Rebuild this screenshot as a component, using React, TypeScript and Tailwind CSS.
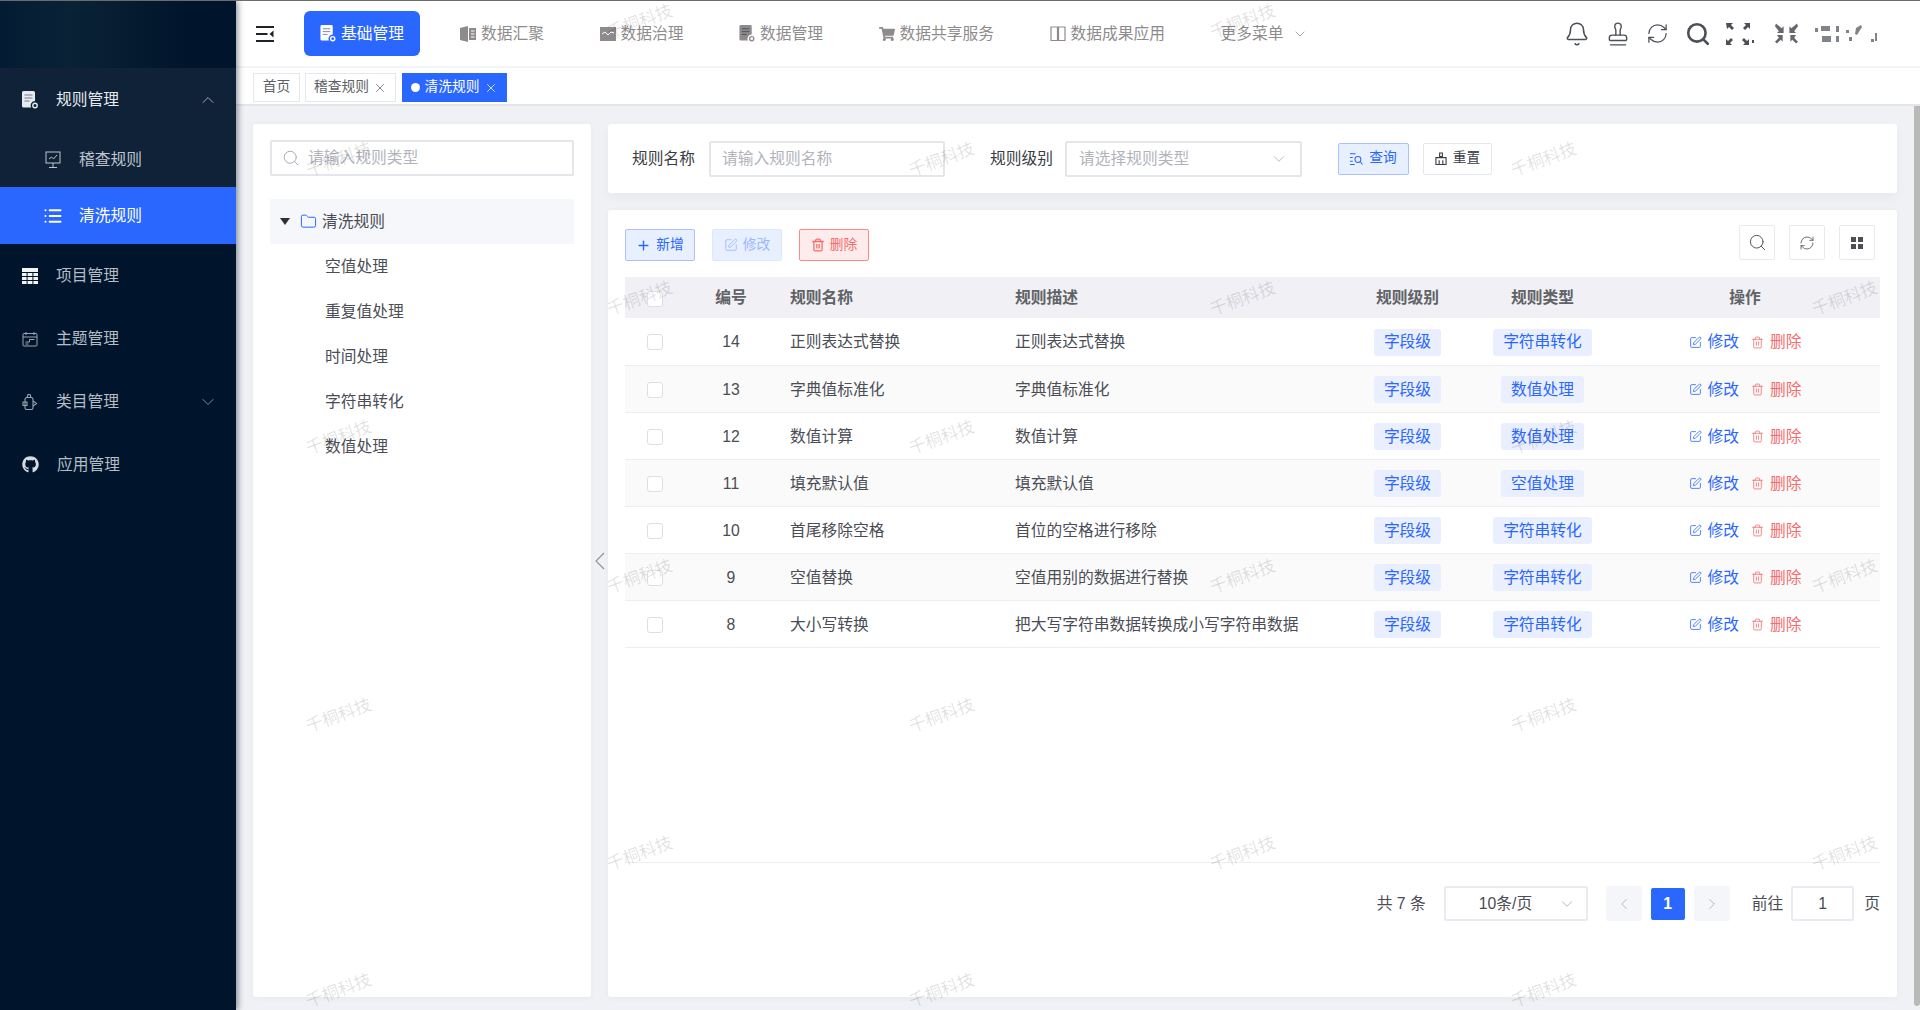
import React from "react";
import { Bell, Stamp, RefreshCw, Search, ChevronUp, ChevronDown, ChevronLeft, ChevronRight, X, Plus, SquarePen, Trash2, List, Folder } from "lucide-react";
import { FaGithub, FaShoppingCart } from "react-icons/fa";

const rows = [
  { id: 14, name: "正则表达式替换", desc: "正则表达式替换", type: "字符串转化" },
  { id: 13, name: "字典值标准化", desc: "字典值标准化", type: "数值处理" },
  { id: 12, name: "数值计算", desc: "数值计算", type: "数值处理" },
  { id: 11, name: "填充默认值", desc: "填充默认值", type: "空值处理" },
  { id: 10, name: "首尾移除空格", desc: "首位的空格进行移除", type: "字符串转化" },
  { id: 9, name: "空值替换", desc: "空值用别的数据进行替换", type: "字符串转化" },
  { id: 8, name: "大小写转换", desc: "把大写字符串数据转换成小写字符串数据", type: "字符串转化" },
];

const treeItems = ["空值处理", "重复值处理", "时间处理", "字符串转化", "数值处理"];

const marks = [
  [339, 159], [942, 159], [1544, 159],
  [339, 437], [942, 437], [1544, 437],
  [339, 715], [942, 715], [1544, 715],
  [339, 990], [942, 990], [1544, 990],
  [640, 21], [1243, 21],
  [640, 298], [1243, 298], [1845, 298],
  [640, 576], [1243, 576], [1845, 576],
  [640, 853], [1243, 853], [1845, 853],
];

const DocIcon = ({ className }: { className?: string }) => (
  <svg viewBox="0 0 16 18" className={className} fill="currentColor">
    <path d="M1.5 0h10A1.5 1.5 0 0 1 13 1.5V10a4.5 4.5 0 0 0-4 6.5H1.5A1.5 1.5 0 0 1 0 15V1.5A1.5 1.5 0 0 1 1.5 0z" />
    <path d="M2.5 4h8M2.5 7h8M2.5 10h5" stroke="#0f2238" strokeOpacity=".55" strokeWidth="1" />
    <circle cx="13" cy="14.5" r="2.2" fill="none" stroke="currentColor" strokeWidth="1.4" />
  </svg>
);

const MonitorIcon = () => (
  <svg viewBox="0 0 16 18" className="h-[18px] w-[16px]" fill="none" stroke="currentColor" strokeWidth="1">
    <rect x="1" y="1" width="14" height="11" />
    <path d="M8 12v4M4 16.5h8M4 8l2.5-2 2 2 3.5-4" />
  </svg>
);

const CalendarIcon = () => (
  <svg viewBox="0 0 16 16" className="h-[16px] w-[16px]" fill="none" stroke="currentColor" strokeWidth="1">
    <rect x="1" y="2.5" width="14" height="12.5" rx="1" />
    <path d="M4 1v3M12 1v3M1 6h14M3.5 11h4V8.5h5M3.5 13h3" />
  </svg>
);

const PotIcon = () => (
  <svg viewBox="0 0 16 18" className="h-[18px] w-[16px]" fill="none" stroke="currentColor" strokeWidth="1.1">
    <path d="M3 6.5a2 2 0 0 1 2-2h4a2 2 0 0 1 2 2V15a1.5 1.5 0 0 1-1.5 1.5h-5A1.5 1.5 0 0 1 3 15z" />
    <path d="M5 4.5 6 1.5h2l1 3M11 8l3.5 2.5L11 13M1 9h4v3.5H1z" />
  </svg>
);

const TableIcon = () => (
  <svg viewBox="0 0 16 16" className="h-[16px] w-[16px]" fill="currentColor">
    <path d="M0 0h16v4H0zM0 5h4.6v3H0zM5.6 5h4.8v3H5.6zM11.4 5H16v3h-4.6zM0 9h4.6v3H0zM5.6 9h4.8v3H5.6zM11.4 9H16v3h-4.6zM0 13h4.6v3H0zM5.6 13h4.8v3H5.6zM11.4 13H16v3h-4.6z" />
  </svg>
);

const BookIcon = () => (
  <svg viewBox="0 0 16 16" className="h-[16px] w-[16px]" fill="currentColor">
    <path d="M0 2l8-2v16l-8-2zM9 2h7v12H9z" />
    <path d="M11 5h3.5M11 8h3.5M11 11h3.5" stroke="#fff" strokeWidth="1" />
  </svg>
);

const ChartIcon = () => (
  <svg viewBox="0 0 16 14" className="h-[14px] w-[16px]" fill="currentColor">
    <path d="M0 0h16v14H0z" />
    <path d="M2 7l3-2 3 3 3-3 3 1" fill="none" stroke="#fff" strokeWidth="1" />
  </svg>
);

const OpenBookIcon = () => (
  <svg viewBox="0 0 16 16" className="h-[16px] w-[16px]" fill="none" stroke="currentColor" strokeWidth="1.2">
    <path d="M1 1h6.5v13.5H1zM8.5 1H15v13.5H8.5z" />
  </svg>
);

const navItems = [
  { label: "数据汇聚", icon: <BookIcon /> },
  { label: "数据治理", icon: <ChartIcon /> },
  { label: "数据管理", icon: <DocIcon className="h-[17px] w-[16px]" /> },
  { label: "数据共享服务", icon: <FaShoppingCart className="h-[16px] w-[16px]" /> },
  { label: "数据成果应用", icon: <OpenBookIcon /> },
];

const sideItems = [
  { label: "项目管理", icon: <TableIcon />, white: true },
  { label: "主题管理", icon: <CalendarIcon /> },
  { label: "类目管理", icon: <PotIcon />, arrow: true },
  { label: "应用管理", icon: <FaGithub className="h-[17px] w-[17px] text-[#d5dbe2]" /> },
];

const Sidebar = () => (
  <aside className="z-10 flex w-[236px] shrink-0 flex-col bg-[#00152b] text-[15.75px] shadow-[2px_0_6px_rgba(0,21,41,0.45)]">
    <div className="h-[67px] bg-[linear-gradient(90deg,#031c33,#0a2236_30%,#00152b_80%)]" />
    <div className="bg-[#0f2238]">
      <div className="flex h-[62px] items-center pl-[22px] pr-[18px] pt-[2px] text-[#e6ebf0]">
        <DocIcon className="h-[18px] w-[16px]" />
        <span className="ml-[18px]">规则管理</span>
        <ChevronUp className="ml-auto h-[20px] w-[20px] text-[#aeb6c0]" strokeWidth={1.1} />
      </div>
      <div className="flex h-[57px] items-center pl-[45px] pt-[2px] text-[#bcc5cf]">
        <MonitorIcon />
        <span className="ml-[18px]">稽查规则</span>
      </div>
    </div>
    <div className="flex h-[57px] items-center bg-[#2a67fe] pl-[43px] pt-[1px] text-white">
      <List className="h-[20px] w-[20px]" strokeWidth={2.4} />
      <span className="ml-[16px]">清洗规则</span>
    </div>
    {sideItems.map((item) => (
      <div key={item.label} className="flex h-[63px] items-center pl-[22px] pr-[18px] text-[#b4bdc8]">
        <span className={item.white ? "text-[#f2f4f6]" : "text-[#9aa5b1]"}>{item.icon}</span>
        <span className="ml-[18px]">{item.label}</span>
        {item.arrow && <ChevronDown className="ml-auto h-[20px] w-[20px] text-[#8d97a3]" strokeWidth={1.1} />}
      </div>
    ))}
  </aside>
);

const Header = () => (
  <header className="flex h-[67px] shrink-0 items-center border-b-2 border-[#f3f4f6] bg-white pl-[20px] pr-[40px] text-[15.75px] text-[#8f8b8d]">
    <svg viewBox="0 0 18 16" className="h-[16px] w-[18px] text-[#1f2329]" fill="currentColor">
      <path d="M0 0h18v2H0zM0 7h11.5v2H0zM0 14h18v2H0zM17.5 4.5v7L13.5 8z" />
    </svg>
    <button className="ml-[30px] flex h-[45px] w-[116px] items-center justify-center gap-[5px] rounded-[6px] bg-[#2a67fe] text-white">
      <DocIcon className="h-[17px] w-[16px]" />
      基础管理
    </button>
    <nav className="ml-[40px] flex items-center gap-[55.5px]">
      {navItems.map((item) => (
        <div key={item.label} className="flex items-center gap-[5px]">
          {item.icon}
          <span>{item.label}</span>
        </div>
      ))}
      <div className="flex items-center gap-[8px]">
        <span>更多菜单</span>
        <ChevronDown className="h-[16px] w-[16px]" strokeWidth={1.1} />
      </div>
    </nav>
    <div className="ml-auto flex items-center text-[#4b4f57]">
      <Bell className="h-[26px] w-[26px]" strokeWidth={1.4} />
      <Stamp className="ml-[15px] h-[26px] w-[26px]" strokeWidth={1.3} />
      <RefreshCw className="ml-[15px] h-[23px] w-[23px]" strokeWidth={1.3} />
      <Search className="ml-[16px] h-[26px] w-[26px]" strokeWidth={2.4} />
      <svg viewBox="0 0 28 22" className="ml-[15px] h-[22px] w-[28px] blur-[0.3px]" fill="currentColor">
        <path d="M0 0h7L5 2l3 3-2 2-3-3-2 2zM18 0h6v6l-2-2-3 3-2-2 3-3zM0 22v-6l2 2 3-3 2 2-3 3 2 2zM18 15l3 3 2-2v6h-6l2-2-3-3zM26 17h2v3h-2z" />
      </svg>
      <svg viewBox="0 0 24 22" className="ml-[21px] h-[22px] w-[23px] opacity-85 blur-[0.5px]" fill="currentColor">
        <path d="M1 0l6 5 2-2v7H2l2-2-4-5zM23 0l-6 5-2-2v7h7l-2-2 4-5zM8 12v7l-2-2-4 4-2-2 4-4-2-3zM16 12v7l2-2 4 4 2-2-4-4 2-3z" />
      </svg>
      <svg viewBox="0 0 65 22" className="ml-[17px] h-[22px] w-[65px] opacity-70 blur-[0.7px]" fill="currentColor">
        <path d="M0 5h3v4H0zM6 3h9v5H6zM7 13h9v6H7zM21 3h3v6h-3zM21 13h3v6h-3zM31 7h3v3h-3zM34 14h3v4h-3zM41 5l5-3 1 2-5 8-2-1zM60 10h2v8h-2zM56 16h3v3h-3z" />
      </svg>
    </div>
  </header>
);

const Tags = () => (
  <div className="flex h-[38px] shrink-0 gap-[5px] border-b-2 border-[#e3e5e9] bg-white pl-[17px] pt-[5px] text-[13.75px]">
    <div className="flex h-[29px] w-[47px] items-center justify-center border border-[#e4e7ed] text-[#5c5f66]">首页</div>
    <div className="flex h-[29px] w-[91px] items-center justify-center gap-[4px] border border-[#e4e7ed] text-[#5c5f66]">
      稽查规则
      <X className="h-[14px] w-[14px]" strokeWidth={1.3} />
    </div>
    <div className="ml-[1px] flex h-[29px] w-[105px] items-center justify-center gap-[4px] bg-[#2a67fe] text-white">
      <span className="h-[9px] w-[9px] rounded-full bg-white" />
      清洗规则
      <X className="h-[14px] w-[14px]" strokeWidth={1.3} />
    </div>
  </div>
);

const TreePanel = () => (
  <section className="flex w-[338px] shrink-0 flex-col rounded-[3px] bg-white px-[17px] pt-[16px] text-[15.75px] shadow-[0_1px_6px_rgba(0,0,0,0.04)]">
    <div className="flex h-[36px] items-center rounded-[2px] border-2 border-[#e4e6ec] pl-[10px]">
      <Search className="h-[18px] w-[18px] text-[#a8abb2]" strokeWidth={1.3} />
      <input readOnly placeholder="请输入规则类型" className="ml-[8px] min-w-0 flex-1 bg-transparent outline-none placeholder:text-[#b1b4bb]" />
    </div>
    <div className="mt-[23px] flex h-[45px] items-center bg-[#f5f7fa] pl-[10px] text-[#4a4d55]">
      <span className="h-0 w-0 border-x-[5px] border-t-[7px] border-x-transparent border-t-[#303133]" />
      <Folder className="ml-[10px] h-[17px] w-[17px] text-[#2a67fe]" strokeWidth={1.4} />
      <span className="ml-[5px]">清洗规则</span>
    </div>
    {treeItems.map((item) => (
      <div key={item} className="flex h-[45px] items-center pl-[55px] text-[#4a4d55]">{item}</div>
    ))}
  </section>
);

const Filter = () => (
  <section className="flex h-[69px] shrink-0 items-center rounded-[3px] bg-white pl-[24px] text-[15.75px] text-[#3a3d44] shadow-[0_4px_12px_rgba(0,0,0,0.04)]">
    <span>规则名称</span>
    <input readOnly placeholder="请输入规则名称" className="ml-[14px] h-[36px] w-[236px] rounded-[2px] border-2 border-[#e4e6ec] pl-[11px] outline-none placeholder:text-[#b1b4bb]" />
    <span className="ml-[45px]">规则级别</span>
    <div className="ml-[12px] flex h-[36px] w-[237px] items-center justify-between rounded-[2px] border-2 border-[#e4e6ec] pl-[12px] pr-[12px] text-[#b1b4bb]">
      请选择规则类型
      <ChevronDown className="h-[18px] w-[18px] text-[#a8abb2]" strokeWidth={1.1} />
    </div>
    <button className="ml-[36px] flex h-[32px] w-[71px] items-center justify-center gap-[6px] rounded-[2px] border border-[#a9c2ff] bg-[#e8efff] text-[13.75px] text-[#2a67fe]">
      <svg viewBox="0 0 14 14" className="h-[13px] w-[13px]" fill="none" stroke="currentColor" strokeWidth="1.1">
        <path d="M0 2h6M0 6h3M0 10h3M0 13.5h5" />
        <circle cx="8.5" cy="8" r="3.2" />
        <path d="M11 10.5l2.5 3" />
      </svg>
      查询
    </button>
    <button className="ml-[14px] flex h-[32px] w-[69px] items-center justify-center gap-[6px] rounded-[2px] border border-[#e4e7ed] text-[13.75px] text-[#3a3d44]">
      <svg viewBox="0 0 13 14" className="h-[13px] w-[12px]" fill="none" stroke="currentColor" strokeWidth="1.2">
        <path d="M5 1h3v4H5zM1 6h11v7.5H1zM4.5 9v4.5M8.5 9v4.5" />
      </svg>
      重置
    </button>
  </section>
);

const Tag = ({ text }: { text: string }) => (
  <span className="inline-flex h-[27px] items-center rounded-[3px] bg-[#e9efff] px-[10px] text-[#2a67fe]">{text}</span>
);

const ToolButton = ({ children }: { children: React.ReactNode }) => (
  <button className="flex h-[35px] w-[36px] items-center justify-center rounded-[2px] border border-[#e8eaee] text-[#4b4f57]">{children}</button>
);

const Checkbox = () => <span className="inline-block h-[16px] w-[16px] rounded-[3px] border border-[#dcdfe6] bg-white align-middle" />;

const DataTable = () => (
  <section className="mt-[17px] flex min-h-0 flex-1 flex-col rounded-[3px] bg-white px-[17px] pt-[15px] text-[15.75px] shadow-[0_1px_6px_rgba(0,0,0,0.04)]">
    <div className="flex h-[52px] shrink-0 items-start justify-between">
      <div className="mt-[4px] flex gap-[17px] text-[13.75px]">
        <button className="flex h-[32px] w-[70px] items-center justify-center gap-[5px] rounded-[2px] border border-[#a9c2ff] bg-[#e8efff] text-[#2a67fe]">
          <Plus className="h-[15px] w-[15px]" strokeWidth={2.2} />
          新增
        </button>
        <button className="flex h-[32px] w-[70px] items-center justify-center gap-[5px] rounded-[2px] border border-[#dfe7ff] bg-[#e8efff] text-[#9ab8ff]">
          <SquarePen className="h-[14px] w-[14px]" strokeWidth={1.5} />
          修改
        </button>
        <button className="flex h-[32px] w-[70px] items-center justify-center gap-[5px] rounded-[2px] border border-[#fb8a8a] bg-[#feecec] text-[#f56c6c]">
          <Trash2 className="h-[14px] w-[14px]" strokeWidth={2.2} />
          删除
        </button>
      </div>
      <div className="mr-[5px] flex gap-[14px]">
        <ToolButton><Search className="h-[19px] w-[19px]" strokeWidth={1.2} /></ToolButton>
        <ToolButton><RefreshCw className="h-[16px] w-[16px]" strokeWidth={1.2} /></ToolButton>
        <ToolButton>
          <svg viewBox="0 0 12 12" className="h-[12px] w-[12px]" fill="currentColor">
            <path d="M0 0h5v5H0zM7 0h5v5H7zM0 7h5v5H0zM7 7h5v5H7z" />
          </svg>
        </ToolButton>
      </div>
    </div>
    <table className="w-full table-fixed border-collapse">
      <colgroup>
        <col className="w-[60px]" />
        <col className="w-[92px]" />
        <col className="w-[224px]" />
        <col className="w-[339px]" />
        <col className="w-[135px]" />
        <col className="w-[135px]" />
        <col className="w-[270px]" />
      </colgroup>
      <thead>
        <tr className="h-[41px] bg-[#f0f0f5] text-[#606266]">
          <th><Checkbox /></th>
          <th className="font-semibold">编号</th>
          <th className="pl-[13px] text-left font-semibold">规则名称</th>
          <th className="pl-[14px] text-left font-semibold">规则描述</th>
          <th className="font-semibold">规则级别</th>
          <th className="font-semibold">规则类型</th>
          <th className="font-semibold">操作</th>
        </tr>
      </thead>
      <tbody className="text-[#4a4d55]">
        {rows.map((row, i) => (
          <tr key={row.id} className={`h-[47px] border-b border-[#ebeef5] ${i % 2 === 1 ? "bg-[#fafafa]" : "bg-white"}`}>
            <td className="text-center"><Checkbox /></td>
            <td className="pt-[2px] text-center">{row.id}</td>
            <td className="pl-[13px] pt-[2px]">{row.name}</td>
            <td className="pl-[14px] pt-[2px]">{row.desc}</td>
            <td className="pt-[2px] text-center"><Tag text="字段级" /></td>
            <td className="pt-[2px] text-center"><Tag text={row.type} /></td>
            <td className="pt-[2px]">
              <div className="flex items-center justify-center">
                <SquarePen className="h-[13px] w-[13px] text-[#2a67fe]" strokeWidth={1.5} />
                <span className="ml-[6px] text-[#2a67fe]">修改</span>
                <Trash2 className="ml-[12px] h-[13px] w-[13px] text-[#f56c6c]" strokeWidth={1.5} />
                <span className="ml-[6px] text-[#f56c6c]">删除</span>
              </div>
            </td>
          </tr>
        ))}
      </tbody>
    </table>
    <div className="flex-1" />
    <div className="flex h-[135px] shrink-0 items-start justify-end border-t border-[#ebeef5] pt-[23px] text-[#4a4d55]">
      <span className="flex h-[35px] items-center">共 7 条</span>
      <div className="ml-[18px] flex h-[35px] w-[144px] items-center rounded-[2px] border-2 border-[#e9ebf0] pl-[33px] pr-[10px]">
        10条/页
        <ChevronDown className="ml-auto h-[18px] w-[18px] text-[#a8abb2]" strokeWidth={1.1} />
      </div>
      <div className="ml-[18px] flex h-[35px] w-[36px] items-center justify-center rounded-[2px] bg-[#f4f6fa] text-[#a8abb2]">
        <ChevronLeft className="h-[18px] w-[18px]" strokeWidth={1.1} />
      </div>
      <div className="ml-[9px] mt-[2px] flex h-[32px] w-[34px] items-center justify-center rounded-[2px] bg-[#2a67fe] font-bold text-white">1</div>
      <div className="ml-[9px] flex h-[35px] w-[36px] items-center justify-center rounded-[2px] bg-[#f4f6fa] text-[#a8abb2]">
        <ChevronRight className="h-[18px] w-[18px]" strokeWidth={1.1} />
      </div>
      <span className="ml-[22px] flex h-[35px] items-center">前往</span>
      <div className="ml-[8px] flex h-[35px] w-[63px] items-center justify-center rounded-[2px] border-2 border-[#e9ebf0]">1</div>
      <span className="ml-[10px] flex h-[35px] items-center">页</span>
    </div>
  </section>
);

export default function App() {
  return (
    <div className="relative flex h-[1010px] w-[1920px] overflow-hidden border-t border-[#6b6b6b] font-['Liberation_Sans','Noto_Sans_CJK_SC',sans-serif]">
      <Sidebar />
      <div className="flex min-w-0 flex-1 flex-col">
        <Header />
        <Tags />
        <div className="flex min-h-0 flex-1 bg-[#eff1f5]">
          <main className="flex min-w-0 flex-1 pb-[13px] pl-[17px] pr-[17px] pt-[18px]">
            <TreePanel />
            <div className="flex w-[17px] shrink-0 items-center justify-center">
              <svg viewBox="0 0 10 18" className="h-[18px] w-[10px] text-[#8e9096]" fill="none" stroke="currentColor" strokeWidth="1.1">
                <path d="M9 1 1 9l8 8" />
              </svg>
            </div>
            <div className="flex min-w-0 flex-1 flex-col">
              <Filter />
              <DataTable />
            </div>
          </main>
          <div className="mb-[4px] w-[6px] shrink-0 rounded-b-[3px] bg-[#b9b9b9]" />
        </div>
      </div>
      <div className="pointer-events-none absolute inset-0 z-20">
        {marks.map(([x, y]) => (
          <span
            key={`${x}-${y}`}
            className="absolute -translate-x-1/2 -translate-y-1/2 -rotate-[20deg] whitespace-nowrap text-[17px] text-[rgba(0,0,0,0.13)]"
            style={{ left: x, top: y }}
          >
            千桐科技
          </span>
        ))}
      </div>
    </div>
  );
}
